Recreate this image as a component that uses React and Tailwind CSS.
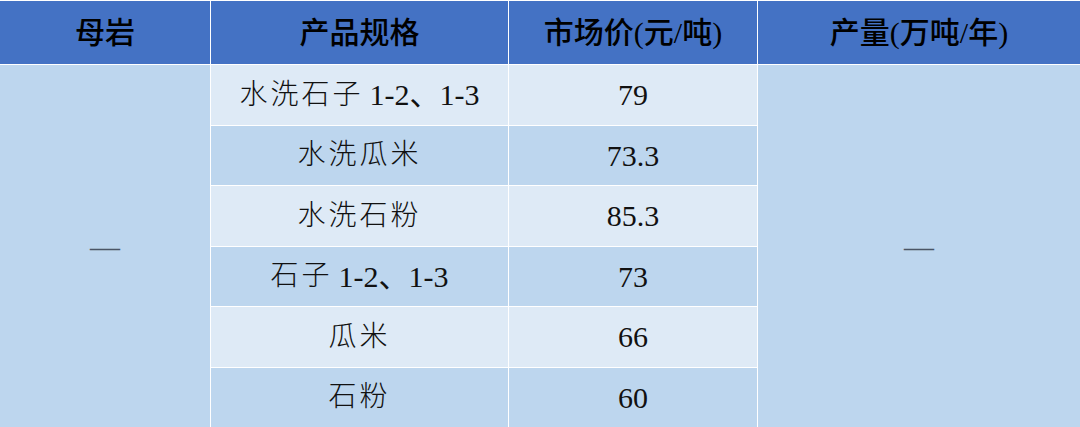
const rows = [
	{ name: '水洗石子', size: '1-2、1-3', price: '79' },
	{ name: '水洗瓜米', price: '73.3' },
	{ name: '水洗石粉', price: '85.3' },
	{ name: '石子', size: '1-2、1-3', price: '73' },
	{ name: '瓜米', price: '66' },
	{ name: '石粉', price: '60' },
];

const headers = ['母岩', '产品规格', '市场价(元/吨)', '产量(万吨/年)'];

export default function App() {
	return (
		<div className="w-[1080px] h-[427px] bg-white pt-px overflow-hidden">
			<div className="grid h-full gap-px grid-cols-[210px_297px_248px_1fr] grid-rows-[63px_repeat(6,1fr)] text-[#111] font-['Liberation_Serif','Noto_Sans_CJK_SC',serif]">
				{headers.map(h => (
					<div
						key={h}
						className="bg-[#4472c4] flex items-center justify-center text-[30px] font-medium text-black">
						{h}
					</div>
				))}

				<div className="row-span-6 col-start-1 row-start-2 bg-[#bdd6ee] flex items-center justify-center text-[30px] text-[#4a5566]">
					—
				</div>

				{rows.map((row, i) => (
					<div key={row.price} className="contents">
						<div
							className={`col-start-2 flex items-center justify-center text-[30px] ${i % 2 === 0 ? 'bg-[#deeaf6]' : 'bg-[#bdd6ee]'}`}>
							<span className="text-[28px] font-light tracking-[3px]">{row.name}</span>
							{row.size && <span className="ml-[6px]">{row.size}</span>}
						</div>
						<div
							className={`col-start-3 flex items-center justify-center text-[30px] ${i % 2 === 0 ? 'bg-[#deeaf6]' : 'bg-[#bdd6ee]'}`}>
							{row.price}
						</div>
					</div>
				))}

				<div className="row-span-6 col-start-4 row-start-2 bg-[#bdd6ee] flex items-center justify-center text-[30px] text-[#4a5566]">
					—
				</div>
			</div>
		</div>
	);
}
